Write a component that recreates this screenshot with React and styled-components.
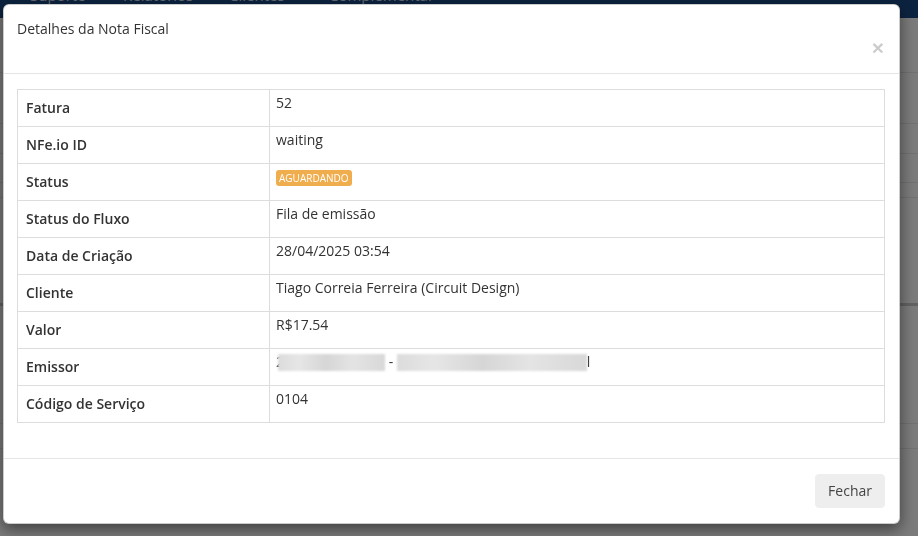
import React from "react";
import styled, { createGlobalStyle } from "styled-components";

const GlobalStyle = createGlobalStyle`
  html, body {
    margin: 0;
    padding: 0;
    height: 100%;
    overflow: hidden;
  }
  body {
    font-family: "Open Sans", "Noto Sans", sans-serif;
    font-size: 14px;
    line-height: 20px;
    color: #333;
    background: #f6f6f6;
  }
`;

const Page = styled.div`
  width: 918px;
  height: 536px;
  display: flex;
  flex-direction: column;
`;

const TopBar = styled.div`
  height: 18px;
  background: #18467f;
  display: flex;
  overflow: hidden;
  padding-left: 30px;
`;

const TopLink = styled.span`
  width: ${(p) => p.w}px;
  margin-top: -15px;
  font-size: 15px;
  color: #c9d3e0;
`;

const BgRow = styled.div`
  height: ${(p) => p.h}px;
  border-bottom: ${(p) => (p.thick ? "3px solid #c4c4c4" : "1px solid #e2e2e2")};
  box-sizing: border-box;
`;

const Backdrop = styled.div`
  position: fixed;
  inset: 0;
  background: rgba(0, 0, 0, 0.5);
`;

const Modal = styled.div`
  position: fixed;
  top: 4px;
  left: 3px;
  width: 897px;
  box-sizing: border-box;
  background: #fff;
  border: 1px solid rgba(0, 0, 0, 0.2);
  border-radius: 6px;
  box-shadow: 0 5px 15px rgba(0, 0, 0, 0.5);
  display: flex;
  flex-direction: column;
`;

const Header = styled.div`
  padding: 14px 15px 16px 13px;
  border-bottom: 1px solid #e5e5e5;
  display: flex;
  flex-direction: column;
`;

const Title = styled.h4`
  margin: 0;
  font-size: 14px;
  font-weight: 400;
  line-height: 20px;
  color: #333;
`;

const Close = styled.button`
  align-self: flex-end;
  height: 18px;
  padding: 0;
  border: 0;
  background: none;
  font-family: "Liberation Sans", Arial, sans-serif;
  font-size: 21px;
  font-weight: 700;
  line-height: 18px;
  color: #000;
  opacity: 0.2;
  cursor: pointer;
`;

const Body = styled.div`
  padding: 15px 14px 35px 13px;
`;

const Table = styled.table`
  width: 100%;
  border-collapse: collapse;
  table-layout: fixed;
`;

const Label = styled.th`
  width: 252px;
  box-sizing: border-box;
  padding: 8px 8px;
  border: 1px solid #ddd;
  text-align: left;
  vertical-align: middle;
  font-weight: 600;
  color: #333;
`;

const Value = styled.td`
  padding: 3px 6px 13px;
  border: 1px solid #ddd;
  vertical-align: top;
  color: #333;
`;

const Badge = styled.span`
  display: inline-block;
  margin-top: 3px;
  padding: 0 3px;
  font-size: 10px;
  line-height: 16px;
  color: #fff;
  background: #f0ad4e;
  border-radius: 3px;
`;

const Redacted = styled.span`
  display: inline-block;
  vertical-align: middle;
  width: ${(p) => p.w}px;
  height: 17px;
  margin-top: -2px;
  background: linear-gradient(
    90deg,
    #dcdcdc 0%,
    #e6e6e6 20%,
    #d6d6d6 45%,
    #e4e4e4 70%,
    #d8d8d8 100%
  );
  filter: blur(1px);
`;

const Footer = styled.div`
  padding: 15px 14px 15px 15px;
  border-top: 1px solid #e5e5e5;
  display: flex;
  justify-content: flex-end;
`;

const Button = styled.button`
  font-family: "Open Sans", "Noto Sans", sans-serif;
  font-size: 14px;
  line-height: 20px;
  padding: 6px 12px;
  color: #444;
  background: #eeeeee;
  border: 1px solid #eeeeee;
  border-radius: 4px;
  cursor: pointer;
`;

const rows = [
  ["Fatura", "52"],
  ["NFe.io ID", "waiting"],
  ["Status", <Badge>AGUARDANDO</Badge>],
  ["Status do Fluxo", "Fila de emissão"],
  ["Data de Criação", "28/04/2025 03:54"],
  ["Cliente", "Tiago Correia Ferreira (Circuit Design)"],
  ["Valor", "R$17.54"],
  [
    "Emissor",
    <>
      2<Redacted w={107} style={{ marginLeft: -6 }} /> - <Redacted w={190} />l
    </>,
  ],
  ["Código de Serviço", "0104"],
];

export default function App() {
  return (
    <>
      <GlobalStyle />
      <Page>
        <TopBar>
          <TopLink w={93}>Suporte</TopLink>
          <TopLink w={106}>Relatórios</TopLink>
          <TopLink w={100}>Clientes</TopLink>
          <TopLink w={140}>Complementar</TopLink>
        </TopBar>
        <BgRow h={55} />
        <BgRow h={51} />
        <BgRow h={30} />
        <BgRow h={29} />
        <BgRow h={15} />
        <BgRow h={108} thick />
        <BgRow h={118} />
        <BgRow h={25} />
      </Page>
      <Backdrop />
      <Modal>
        <Header>
          <Title>Detalhes da Nota Fiscal</Title>
          <Close aria-label="Fechar">×</Close>
        </Header>
        <Body>
          <Table>
            <tbody>
              {rows.map(([label, value]) => (
                <tr key={label}>
                  <Label>{label}</Label>
                  <Value>{value}</Value>
                </tr>
              ))}
            </tbody>
          </Table>
        </Body>
        <Footer>
          <Button>Fechar</Button>
        </Footer>
      </Modal>
    </>
  );
}
